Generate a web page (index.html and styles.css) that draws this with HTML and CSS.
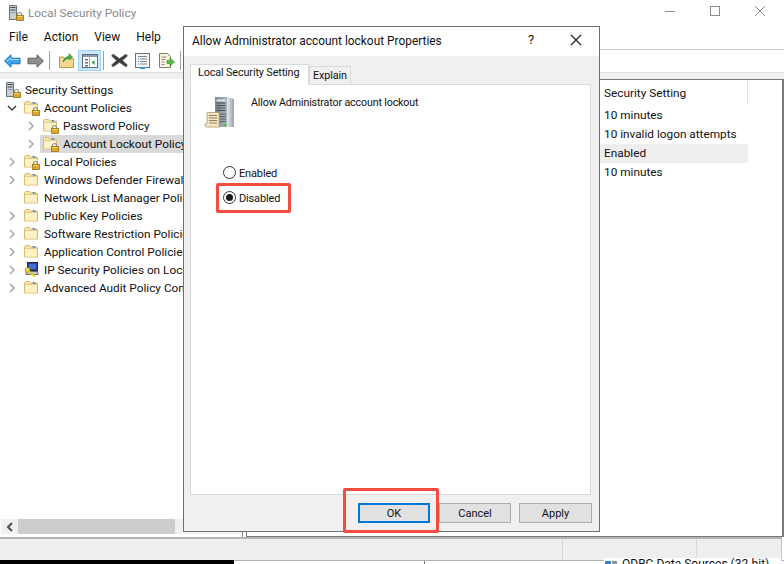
FILE: index.html
```html
<!DOCTYPE html>
<html lang="en">
<head>
<meta charset="utf-8">
<title>Local Security Policy</title>
<link rel="stylesheet" href="styles.css">
</head>
<body>
<svg class="defs" width="0" height="0" aria-hidden="true">
  <defs>
    <symbol id="folder" viewBox="0 0 18 18">
      <path d="M.5 4V3.500L1.500 2.500h4l1 1.500h6.500l.5.500v9.500H.5z" fill="#fbe7a6" stroke="#d8bc72"/>
      <path d="M1.500 6h11v7.500h-11z" fill="#fdf1c6"/>
      <path d="M1 5.500h12" stroke="#e4cd8c"/>
      <path d="M9 3v1.500h3" stroke="#6fa8d8"/>
    </symbol>
    <symbol id="lock" viewBox="0 0 18 18">
      <path d="M9.500 12.500v-2a2 2 0 0 1 4 0v2" fill="none" stroke="#8f8f80" stroke-width="1.200"/>
      <rect x="8.500" y="11.500" width="7" height="5" fill="#d8a92c" stroke="#9a7414" stroke-width=".8"/>
      <path d="M9.500 12.500h5" stroke="#f2d672"/>
    </symbol>
    <symbol id="folderlock" viewBox="0 0 18 18">
      <use href="#folder" width="18" height="18"/>
      <use href="#lock" width="18" height="18"/>
    </symbol>
    <symbol id="serverlock" viewBox="0 0 18 18">
      <path d="M1.500 1.500h7v14h-7z" fill="#c8cdd2" stroke="#6c7278"/>
      <path d="M2.500 3.500h5M2.500 6h5" stroke="#3f4a56"/>
      <path d="M2.500 8.500h5" stroke="#8e98a2"/>
      <use href="#lock" width="18" height="18"/>
    </symbol>
    <symbol id="chev" viewBox="0 0 8 10">
      <path d="M2 1l4 4-4 4" fill="none" stroke="#a6a6a6" stroke-width="1.500"/>
    </symbol>
    <symbol id="chevdown" viewBox="0 0 10 8">
      <path d="M1 2l4 4 4-4" fill="none" stroke="#404040" stroke-width="1.500"/>
    </symbol>
    <linearGradient id="towerfront" x1="0" x2="1" y1="0" y2="0">
      <stop offset="0" stop-color="#7e878e"/>
      <stop offset="1" stop-color="#aeb6bc"/>
    </linearGradient>
    <linearGradient id="towerside" x1="0" x2="1" y1="0" y2="0">
      <stop offset="0" stop-color="#e6eaec"/>
      <stop offset="1" stop-color="#98a2a9"/>
    </linearGradient>
  </defs>
</svg>

<div class="window">
  <header class="titlebar">
    <svg class="title-icon" width="18" height="18"><use href="#serverlock"/></svg>
    <span class="title-text">Local Security Policy</span>
    <div class="caption">
      <svg width="12" height="12" viewBox="0 0 12 12"><path d="M1 6.500h10" stroke="#8c8c8c"/></svg>
      <svg width="12" height="12" viewBox="0 0 12 12"><rect x="1.500" y="1.500" width="9" height="9" fill="none" stroke="#8c8c8c"/></svg>
      <svg width="12" height="12" viewBox="0 0 12 12"><path d="M1 1l10 10M11 1L1 11" stroke="#8c8c8c"/></svg>
    </div>
  </header>
  <nav class="menubar">
    <span>File</span><span>Action</span><span>View</span><span>Help</span>
  </nav>
  <div class="toolbar">
    <svg class="tool back" width="17" height="14" viewBox="0 0 17 14"><path d="M.5 7L7 .8v3.400h9v5.600H7v3.400z" fill="#3ea4ee" stroke="#1670bd"/><path d="M3 7l3.500-3v1.500H15" fill="none" stroke="#a8dcff"/></svg>
    <svg class="tool fwd" width="17" height="14" viewBox="0 0 17 14"><path d="M16.500 7L10 .8v3.400H1v5.600h9v3.400z" fill="#8f8f8f" stroke="#5f5f5f"/></svg>
    <i class="tool-sep sep-a"></i>
    <svg class="tool up" width="15" height="16" viewBox="0 0 15 16"><path d="M.5 5h4l1 1.500h9v9H.5z" fill="#f4d78c" stroke="#b89a52"/><path d="M4 10c1-4 3-5 6-6V1.500l3.500 3.500L10 8V6c-2 .5-4 2-6 4z" fill="#3fb54a" stroke="#1e7d2a" stroke-width=".5"/></svg>
    <span class="tool-on">
      <svg width="16" height="14" viewBox="0 0 16 14"><rect x=".5" y=".5" width="15" height="13" fill="#fff" stroke="#5a6a78"/><path d="M1 1h14v2H1z" fill="#8e9aa5"/><path d="M3 5h3v1.500H3zM3 8h3v1.500H3zM3 11h3v1.500H3z" fill="#5f6e7c"/><path d="M7.500 3.500v10" stroke="#9aa5ae"/><path d="M12.500 6v5L9.500 8.500z" fill="#2f9e47"/></svg>
    </span>
    <i class="tool-sep sep-b"></i>
    <svg class="tool del" width="17" height="15" viewBox="0 0 17 15"><path d="M2 1l6.500 4.500L15 1l1.500 2-5 4.500 5 4.500-1.500 2-6.500-4.500L2 14 .5 12l5-4.500-5-4.500z" fill="#3b3b3b" stroke="#6e6e6e" stroke-width=".6"/></svg>
    <svg class="tool props" width="15" height="16" viewBox="0 0 15 16"><rect x=".5" y=".5" width="14" height="14" fill="#f6f6f6" stroke="#6d7278"/><path d="M3 3.500h9M5 6h7M5 8.500h7M5 11h7" stroke="#7e8a96"/><path d="M3 6h1M3 8.500h1M3 11h1" stroke="#3f80b8"/><path d="M5 15h5" stroke="#2a9ad6" stroke-width="2"/></svg>
    <svg class="tool export" width="17" height="16" viewBox="0 0 17 16"><path d="M1.500.5h8l3 3v11h-11z" fill="#fbf6df" stroke="#7c7c6c"/><path d="M3.500 4h5M3.500 6.500h4M3.500 9h3M3.500 11.500h3" stroke="#8a8a7c"/><path d="M9 7.500h3V5l4.500 4-4.500 4v-2.500H9z" fill="#57bf45" stroke="#2e8a28" stroke-width=".6"/></svg>
    <i class="tool-sep sep-c"></i>
  </div>
  <div class="band"></div>

  <main class="panes">
    <section class="tree">
      <ul class="tree-list">
        <li class="node"><svg class="ico" width="18" height="18"><use href="#serverlock"/></svg><span>Security Settings</span></li>
        <li class="node l1"><svg class="arrow" width="10" height="8"><use href="#chevdown"/></svg><svg class="ico" width="18" height="18"><use href="#folderlock"/></svg><span>Account Policies</span></li>
        <li class="node l2"><svg class="arrow" width="8" height="10"><use href="#chev"/></svg><svg class="ico" width="18" height="18"><use href="#folderlock"/></svg><span>Password Policy</span></li>
        <li class="node l2 selected"><svg class="arrow" width="8" height="10"><use href="#chev"/></svg><svg class="ico" width="18" height="18"><use href="#folderlock"/></svg><span>Account Lockout Policy</span></li>
        <li class="node l1"><svg class="arrow" width="8" height="10"><use href="#chev"/></svg><svg class="ico" width="18" height="18"><use href="#folderlock"/></svg><span>Local Policies</span></li>
        <li class="node l1"><svg class="arrow" width="8" height="10"><use href="#chev"/></svg><svg class="ico" width="18" height="18"><use href="#folder"/></svg><span>Windows Defender Firewall with Advanced Security</span></li>
        <li class="node l1"><span class="arrow blank"></span><svg class="ico" width="18" height="18"><use href="#folder"/></svg><span>Network List Manager Policies</span></li>
        <li class="node l1"><svg class="arrow" width="8" height="10"><use href="#chev"/></svg><svg class="ico" width="18" height="18"><use href="#folder"/></svg><span>Public Key Policies</span></li>
        <li class="node l1"><svg class="arrow" width="8" height="10"><use href="#chev"/></svg><svg class="ico" width="18" height="18"><use href="#folder"/></svg><span>Software Restriction Policies</span></li>
        <li class="node l1"><svg class="arrow" width="8" height="10"><use href="#chev"/></svg><svg class="ico" width="18" height="18"><use href="#folder"/></svg><span>Application Control Policies</span></li>
        <li class="node l1"><svg class="arrow" width="8" height="10"><use href="#chev"/></svg><svg class="ico" width="18" height="18" viewBox="0 0 18 18"><rect x="3.500" y="1.500" width="10" height="8" fill="#2f3f9e" stroke="#2a2a2a"/><path d="M5 3h7v5H5z" fill="#3d6fd0"/><path d="M2 10.500h12v3H2z" fill="#c9c9c9" stroke="#3a3a3a" stroke-width=".7"/><circle cx="3.500" cy="9" r="2.300" fill="#f3e24a" stroke="#a59a1a"/><path d="M5 10.500l6 5" stroke="#e3d12c" stroke-width="2"/></svg><span>IP Security Policies on Local Computer</span></li>
        <li class="node l1"><svg class="arrow" width="8" height="10"><use href="#chev"/></svg><svg class="ico" width="18" height="18"><use href="#folder"/></svg><span>Advanced Audit Policy Configuration</span></li>
      </ul>
      <div class="hscroll">
        <svg width="8" height="10" viewBox="0 0 8 10"><path d="M6 1L2 5l4 4" fill="none" stroke="#505050" stroke-width="2"/></svg>
        <div class="thumb"></div>
      </div>
    </section>
    <div class="splitter"></div>
    <section class="list">
      <div class="list-head">Security Setting</div>
      <div class="list-row">10 minutes</div>
      <div class="list-row">10 invalid logon attempts</div>
      <div class="list-row hilite">Enabled</div>
      <div class="list-row">10 minutes</div>
    </section>
  </main>

  <footer class="statusbar"><i class="status-sep sep-1"></i><i class="status-sep sep-2"></i></footer>
  <div class="strip">
    <div class="strip-black"></div>
    <i class="strip-line"></i>
    <div class="strip-text">
      <svg width="14" height="12" viewBox="0 0 14 12"><rect x="1" y="2" width="6" height="7" fill="#3f7fc4"/><rect x="8" y="2" width="5" height="7" fill="#8b9299"/></svg>
      <span>ODBC Data Sources (32-bit)</span>
    </div>
  </div>
</div>

<div class="dialog">
  <div class="dlg-title">
    <span class="dlg-name">Allow Administrator account lockout Properties</span>
    <span class="dlg-help">?</span>
    <svg class="dlg-close" width="12" height="12" viewBox="0 0 12 12"><path d="M1 1l10 10M11 1L1 11" stroke="#1a1a1a" stroke-width="1.100"/></svg>
  </div>
  <div class="dlg-body">
    <div class="tabs">
      <span class="tab active">Local Security Setting</span>
      <span class="tab">Explain</span>
    </div>
    <div class="tab-panel">
      <div class="policy">
        <svg class="policy-icon" width="32" height="34" viewBox="0 0 32 34">
          <path d="M11 1h12v30H11z" fill="url(#towerfront)"/>
          <path d="M23 1l7 2v28h-7z" fill="url(#towerside)"/>
          <path d="M12.500 3.500h9v2h-9z" fill="#dfe4e7"/>
          <path d="M12.500 7h9M12.500 9.500h9M12.500 12h9M12.500 14.500h9" stroke="#474e55"/>
          <path d="M16 18h6M16 20.500h6M16 23h6M16 25.500h6" stroke="#596168"/>
          <circle cx="21" cy="29" r="1.300" fill="#3fc24a"/>
          <path d="M3 16.500h12v11c0 2 .5 3 1 3.500H3c-2 0-2.500-2-2-3h2z" fill="#f4e6c2" stroke="#a99a72" stroke-width=".8"/>
          <path d="M5 19.500h8M5 22h8M5 24.500h8M5 27h8" stroke="#8c8263"/>
        </svg>
        <span class="policy-name">Allow Administrator account lockout</span>
      </div>
      <div class="radios">
        <div class="radio"><span class="dot"></span>Enabled</div>
        <div class="radio"><span class="dot on"></span>Disabled</div>
      </div>
    </div>
    <div class="buttons">
      <span class="btn default">OK</span>
      <span class="btn">Cancel</span>
      <span class="btn wide">Apply</span>
    </div>
  </div>
</div>

<div class="callout callout-radio"></div>
<div class="callout callout-ok"></div>
</body>
</html>
```

FILE: styles.css
```css
* { box-sizing: border-box; }
html, body { margin: 0; padding: 0; }
body {
  width: 784px;
  height: 564px;
  overflow: hidden;
  position: relative;
  background: #fff;
  font-family: Roboto, "Liberation Sans", sans-serif;
  font-size: 11.800px;
  color: #111;
}
.defs { position: absolute; }

.window { width: 784px; height: 564px; display: flex; flex-direction: column; background: #fff; }

.titlebar { height: 25px; display: flex; align-items: center; padding-left: 8px; flex: none; }
.title-icon { margin-right: 2px; }
.title-text { color: #8a8a8a; padding-top: 1px; }
.caption { margin-left: auto; display: flex; gap: 33px; padding-right: 18px; align-items: center; margin-top: -4px; }

.menubar { height: 24px; display: flex; align-items: center; padding-left: 9px; gap: 16px; flex: none; font-size: 12px; }

.toolbar { height: 23px; flex: none; position: relative; background: #fff; }
.toolbar::before { content: ""; position: absolute; left: 184px; right: 0; top: 0; height: 1px; background: #c8c8c8; }
.tool { position: absolute; }
.back { left: 4px; top: 5px; }
.fwd { left: 27px; top: 5px; }
.up { left: 59px; top: 3px; }
.tool-on { position: absolute; left: 78px; top: 1px; width: 23px; height: 21px; background: #cce8ff; border: 1px solid #99d1ff; display: flex; align-items: center; justify-content: center; }
.del { left: 111px; top: 4px; }
.props { left: 135px; top: 4px; }
.export { left: 158px; top: 4px; }
.tool-sep { position: absolute; top: 2px; width: 1px; height: 19px; background: #a0a0a0; }
.sep-a { left: 49px; }
.sep-b { left: 103px; }
.sep-c { left: 180px; }

.band { height: 7px; flex: none; background: #f0f0f0; border-top: 1px solid #dedede; }

.panes { flex: 1; display: flex; min-height: 0; }

.tree { width: 243px; flex: none; display: flex; flex-direction: column; padding-top: 2px; position: relative; border-right: 1px solid #8a8a8a; }
.tree-list { list-style: none; margin: 0; padding: 0; flex: 1; overflow: hidden; }
.node { height: 18px; display: flex; align-items: center; white-space: nowrap; padding-left: 5px; position: relative; }
.node .ico { flex: none; margin-right: 2px; }
.node.l1 { padding-left: 7px; }
.node.l2 { padding-left: 26px; }
.arrow { flex: none; width: 10px; margin-right: 7px; }
.arrow.blank { display: block; height: 8px; }
.selected { background: linear-gradient(to right, transparent 40px, #d9d9d9 40px); }

.hscroll { height: 15px; margin: 0 0 3px 1px; display: flex; align-items: center; background: #f0f0f0; padding-left: 5px; }
.hscroll svg { flex: none; }
.thumb { width: 157px; height: 15px; margin-left: 4px; background: #cdcdcd; }

.splitter { width: 3px; flex: none; }

.list { flex: 1; border: 1px solid #7a7a7a; border-width: 1px 2px 1px 1px; padding-left: 353px; overflow: hidden; }
.list-head { width: 148px; height: 25px; padding-left: 4px; border-right: 1px solid #e5e5e5; line-height: 26px; margin-bottom: 1px; }
.list-row { width: 148px; height: 19px; padding-left: 4px; line-height: 19px; white-space: nowrap; }
.hilite { background: #eeeeee; }

.statusbar { height: 23px; flex: none; background: #eeeeee; border-top: 2px solid #b0b4b8; border-right: 1px solid #c4c4c4; margin-right: 2px; position: relative; }
.status-sep { position: absolute; top: 0; bottom: 0; width: 1px; background: #d9d9d9; }
.sep-1 { left: 562px; }
.sep-2 { left: 696px; }

.strip { height: 4px; flex: none; position: relative; background: #fff; border-top: 1px solid #b4b4b4; }
.strip-black { position: absolute; left: 0; top: -1px; width: 234px; height: 4px; background: #000; }
.strip-line { position: absolute; left: 424px; top: 0; width: 1px; height: 3px; background: #777; }
.strip-text { position: absolute; left: 604px; top: -3px; width: 177px; height: 6px; overflow: hidden; background: #fff; display: flex; gap: 4px; font-size: 12px; line-height: 14px; white-space: nowrap; }
.strip-text svg { flex: none; margin-top: 1px; }
.strip-text span { margin-top: -1px; }

.dialog { position: absolute; left: 183px; top: 26px; width: 417px; height: 506px; background: #f0f0f0; border: 1px solid #6e6e6e; display: flex; flex-direction: column; }
.dlg-title { height: 29px; flex: none; background: #fff; display: flex; align-items: center; padding: 0 0 1px 8px; position: relative; font-size: 11.900px; }
.dlg-help { position: absolute; left: 344px; top: 5px; font-size: 13px; }
.dlg-close { position: absolute; left: 386px; top: 7px; }

.dlg-body { flex: 1; display: flex; flex-direction: column; padding: 7px 8px 0 6px; min-height: 0; }
.tabs { display: flex; align-items: flex-end; height: 21px; flex: none; position: relative; z-index: 1; }
.tab { height: 18px; padding: 2px 3px 0 3px; background: #f0f0f0; border: 1px solid #d9d9d9; border-bottom: none; font-size: 10.800px; letter-spacing: -.12px; white-space: nowrap; }
.tab.active { height: 21px; width: 119px; background: #fff; padding: 1px 0 0 7px; border-bottom: 1px solid #fff; margin-bottom: -1px; }

.tab-panel { height: 411px; flex: none; width: 401px; background: #fff; border: 1px solid #d9d9d9; }
.policy { display: flex; padding: 11px 0 0 13px; height: 62px; }
.policy-icon { flex: none; }
.policy-name { margin: -1px 0 0 15px; font-size: 10.700px; letter-spacing: -.15px; line-height: 16px; }
.radios { padding: 13px 0 0 32px; }
.radio { height: 25px; padding-top: 2px; display: flex; align-items: center; font-size: 11px; letter-spacing: -.15px; }
.dot { width: 13px; height: 13px; margin-top: -2px; border: 1px solid #333; border-radius: 50%; margin-right: 3px; background: #fff; display: flex; align-items: center; justify-content: center; flex: none; }
.dot.on::after { content: ""; width: 7px; height: 7px; border-radius: 50%; background: #1c1c1c; }

.buttons { display: flex; justify-content: flex-end; padding: 8px 0 0 0; margin-right: -1px; gap: 8px; }
.btn { width: 72px; height: 20px; background: #e1e1e1; border: 1px solid #adadad; display: flex; align-items: center; justify-content: center; font-size: 11px; }
.btn.wide { width: 73px; }
.btn.default { border: 2px solid #0078d7; margin-right: 1px; }

.callout { position: absolute; border: 3px solid #f44c3f; border-radius: 2px; }
.callout-radio { left: 216px; top: 183px; width: 75px; height: 30px; }
.callout-ok { left: 343px; top: 488px; width: 96px; height: 45px; }
```
